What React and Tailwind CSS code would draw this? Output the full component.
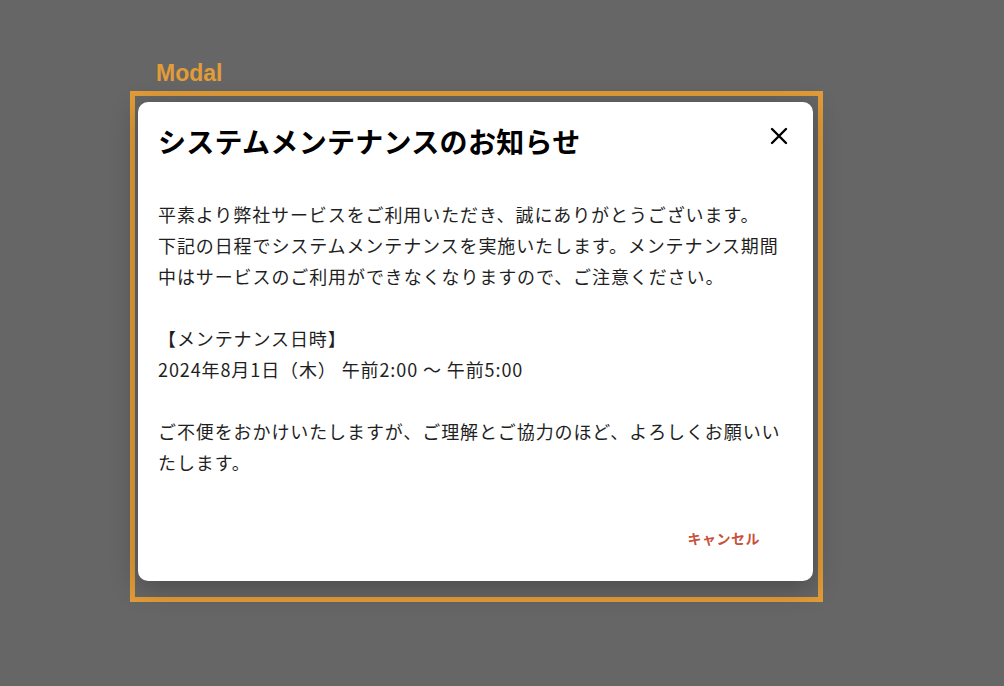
import React from "react";

const BODY = `平素より弊社サービスをご利用いただき、誠にありがとうございます。
下記の日程でシステムメンテナンスを実施いたします。メンテナンス期間中はサービスのご利用ができなくなりますので、ご注意ください。

【メンテナンス日時】
2024年8月1日（木） 午前2:00 〜 午前5:00

ご不便をおかけいたしますが、ご理解とご協力のほど、よろしくお願いいたします。`;

const CloseIcon = () => (
  <svg width="18" height="18" viewBox="0 0 18 18" fill="none" stroke="currentColor" strokeWidth="2.4" strokeLinecap="round">
    <path d="M2 2L16 16M16 2L2 16" />
  </svg>
);

const App = () => {
  return (
    <div className="min-h-screen w-full bg-[#666666] pt-[60px] pl-[130px] font-['Noto_Sans_CJK_JP',sans-serif]">
      <div className="pl-[26px] font-['Liberation_Sans',Arial,sans-serif] text-[23px] leading-[26px] font-bold text-[#e29c38]">
        Modal
      </div>

      <div className="mt-[5px] w-[693px] border-[5px] border-[#e29c38] pl-[3px] pr-[5px] pt-[6px] pb-[16px]">
        <div className="w-[675px] h-[479px] rounded-[10px] bg-white shadow-[0_6px_28px_rgba(0,0,0,0.28)] flex flex-col pt-[18px] pl-5 pr-[22px]">
          <div className="flex items-center justify-between">
            <h2 className="text-[28px] leading-[42px] font-bold tracking-[0.3px] text-black">
              システムメンテナンスのお知らせ
            </h2>
            <button className="w-[24px] h-[24px] flex items-center justify-center text-black -mt-[10px]" aria-label="閉じる">
              <CloseIcon />
            </button>
          </div>

          <p className="mt-[37px] w-[632px] whitespace-pre-wrap text-[18px] leading-[31px] tracking-[0.9px] text-[#1f1f1f]">
            {BODY}
          </p>

          <div className="mt-auto mb-[25px] flex justify-end">
            <button className="pl-[28px] pr-[31px] h-[36px] text-[14px] font-bold text-[#c9513b] tracking-[0.5px]">
              キャンセル
            </button>
          </div>
        </div>
      </div>
    </div>
  );
};

export default App;
